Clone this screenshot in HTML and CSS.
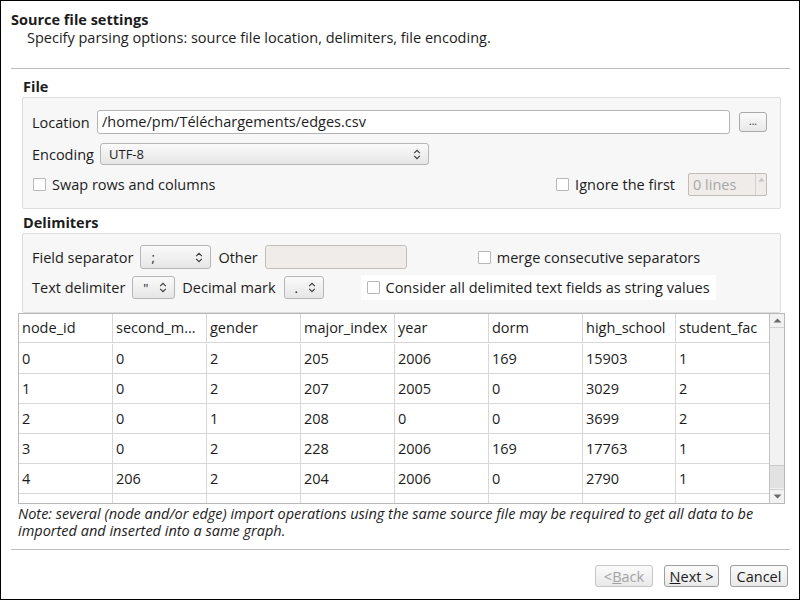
FILE: index.html
```html
<!DOCTYPE html>
<html>
<head>
<meta charset="utf-8">
<link rel="stylesheet" href="styles.css">
</head>
<body>
<div class="dialog">
  <div class="head">
    <div class="title">Source file settings</div>
    <div class="subtitle">Specify parsing options: source file location, delimiters, file encoding.</div>
  </div>
  <div class="sep"></div>
  <div class="content">
    <div class="group-label">File</div>
    <div class="box file-box">
      <div class="row row-loc">
        <span class="lbl lbl-loc">Location</span>
        <div class="field loc">/home/pm/Téléchargements/edges.csv</div>
        <div class="btn dots">...</div>
      </div>
      <div class="row row-enc">
        <span class="lbl lbl-enc">Encoding</span>
        <div class="combo enc"><span class="ctext">UTF-8</span>
          <svg class="chev" width="8" height="11" viewBox="0 0 8 11"><path d="M1.2 4.2 L4 1.4 L6.8 4.2 M1.2 6.8 L4 9.6 L6.8 6.8" fill="none" stroke="#3c3c3c" stroke-width="1.2"/></svg>
        </div>
      </div>
      <div class="row row-chk">
        <label class="check"><span class="box-chk"></span>Swap rows and columns</label>
        <div class="ignore">
          <label class="check"><span class="box-chk"></span>Ignore the first</label>
          <div class="spin"><span class="spin-text">0 lines</span><span class="spin-btn"><svg width="7" height="5" viewBox="0 0 7 5"><path d="M0.5 4.5 L3.5 0.8 L6.5 4.5 Z" fill="#c4c4c4"/></svg></span></div>
        </div>
      </div>
    </div>

    <div class="group-label delim-label">Delimiters</div>
    <div class="box delim-box">
      <div class="row row-d1">
        <span class="lbl">Field separator</span>
        <div class="combo c-field"><span class="ctext">;</span>
          <svg class="chev" width="8" height="11" viewBox="0 0 8 11"><path d="M1.2 4.2 L4 1.4 L6.8 4.2 M1.2 6.8 L4 9.6 L6.8 6.8" fill="none" stroke="#3c3c3c" stroke-width="1.2"/></svg>
        </div>
        <span class="lbl lbl-other">Other</span>
        <div class="field other"></div>
        <label class="check merge"><span class="box-chk"></span>merge consecutive separators</label>
      </div>
      <div class="row row-d2">
        <span class="lbl">Text delimiter</span>
        <div class="combo c-text"><span class="ctext">"</span>
          <svg class="chev" width="8" height="11" viewBox="0 0 8 11"><path d="M1.2 4.2 L4 1.4 L6.8 4.2 M1.2 6.8 L4 9.6 L6.8 6.8" fill="none" stroke="#3c3c3c" stroke-width="1.2"/></svg>
        </div>
        <span class="lbl lbl-dec">Decimal mark</span>
        <div class="combo c-dec"><span class="ctext">.</span>
          <svg class="chev" width="8" height="11" viewBox="0 0 8 11"><path d="M1.2 4.2 L4 1.4 L6.8 4.2 M1.2 6.8 L4 9.6 L6.8 6.8" fill="none" stroke="#3c3c3c" stroke-width="1.2"/></svg>
        </div>
        <label class="check consider"><span class="box-chk"></span>Consider all delimited text fields as string values</label>
      </div>
    </div>

    <div class="table">
      <div class="grid">
        <div class="c h">node_id</div><div class="c h">second_m…</div><div class="c h">gender</div><div class="c h">major_index</div><div class="c h">year</div><div class="c h">dorm</div><div class="c h">high_school</div><div class="c h">student_fac</div>
        <div class="c">0</div><div class="c">0</div><div class="c">2</div><div class="c">205</div><div class="c">2006</div><div class="c">169</div><div class="c">15903</div><div class="c">1</div>
        <div class="c">1</div><div class="c">0</div><div class="c">2</div><div class="c">207</div><div class="c">2005</div><div class="c">0</div><div class="c">3029</div><div class="c">2</div>
        <div class="c">2</div><div class="c">0</div><div class="c">1</div><div class="c">208</div><div class="c">0</div><div class="c">0</div><div class="c">3699</div><div class="c">2</div>
        <div class="c">3</div><div class="c">0</div><div class="c">2</div><div class="c">228</div><div class="c">2006</div><div class="c">169</div><div class="c">17763</div><div class="c">1</div>
        <div class="c">4</div><div class="c">206</div><div class="c">2</div><div class="c">204</div><div class="c">2006</div><div class="c">0</div><div class="c">2790</div><div class="c">1</div>
        <div class="c"></div><div class="c"></div><div class="c"></div><div class="c"></div><div class="c"></div><div class="c"></div><div class="c"></div><div class="c"></div>
      </div>
      <div class="vscroll">
        <div class="sb-btn sb-up"><svg width="9" height="5" viewBox="0 0 9 5"><path d="M0.5 4.5 L4.5 0.5 L8.5 4.5 Z" fill="#6a6a6a"/></svg></div>
        <div class="sb-track"><div class="sb-thumb"></div></div>
        <div class="sb-btn sb-down"><svg width="9" height="5" viewBox="0 0 9 5"><path d="M0.5 0.5 L4.5 4.5 L8.5 0.5 Z" fill="#6a6a6a"/></svg></div>
      </div>
    </div>

    <div class="note">Note: several (node and/or edge) import operations using the same source file may be required to get all data to be imported and inserted into a same graph.</div>
  </div>
  <div class="sep sep2"></div>
  <div class="footer">
    <div class="btn pbtn disabled">&lt; <u>B</u>ack</div>
    <div class="btn pbtn"><u>N</u>ext &gt;</div>
    <div class="btn pbtn">Cancel</div>
  </div>
</div>
</body>
</html>
```

FILE: styles.css
```css
* { box-sizing: border-box; }

body {
  margin: 0;
  font-family: "Open Sans", "Noto Sans", "DejaVu Sans", sans-serif;
  font-size: 14.5px;
  color: #1c1c1c;
  background: #fff;
}

.dialog {
  width: 800px;
  height: 600px;
  border: 1px solid #000;
  background: #fff;
  display: flex;
  flex-direction: column;
}

.head {
  height: 67px;
  padding: 10px 10px 0 10px;
  line-height: 18px;
}
.title { font-weight: bold; }
.subtitle { padding-left: 16px; }

.sep {
  height: 1px;
  background: #bdbdbd;
  margin: 0 9px 0 10px;
  flex: none;
}

.content {
  padding: 0 15px 0 16px;
}

.group-label {
  font-weight: bold;
  line-height: 16px;
  margin: 10px 0 2px 6px;
}
.delim-label { margin-top: 6px; }

.box {
  margin: 0 3px 0 5px;
  border: 1px solid #dcdcdc;
  border-radius: 2px;
  background: #f7f7f7;
}
.file-box { padding: 12px 13px 12px 9px; }
.delim-box { padding: 11px 13px 13px 9px; height: 80px; }

.row {
  display: flex;
  align-items: center;
}
.row-loc { height: 24px; }
.row-enc { height: 22px; margin-top: 9px; }
.row-chk { height: 23px; margin-top: 8px; justify-content: space-between; }
.row-d1 { height: 24px; }
.row-d2 { height: 23px; margin-top: 7px; }

.lbl { white-space: nowrap; }
.lbl-loc { width: 65px; flex: none; }
.lbl-enc { width: 68px; flex: none; }

.field {
  height: 24px;
  border: 1px solid #b4b4b4;
  border-radius: 3px;
  background: #fff;
  padding: 0 4px;
  line-height: 22px;
  white-space: nowrap;
}
.loc { flex: 1; }
.other {
  width: 142px;
  background: #efece9;
  border-color: #c2bfbb;
  margin-left: 7px;
}

.btn {
  border: 1px solid #a9a9a9;
  border-radius: 3px;
  background: linear-gradient(#fbfbfb, #e9e9e9);
  display: flex;
  align-items: center;
  justify-content: center;
  white-space: nowrap;
}
.dots {
  width: 28px;
  height: 20px;
  margin-left: 9px;
  font-size: 10px;
  line-height: 10px;
  padding-bottom: 2px;
}

.combo {
  height: 22px;
  border: 1px solid #b6b6b6;
  border-radius: 3px;
  background: linear-gradient(#fafafa, #e6e6e6);
  display: flex;
  align-items: center;
  justify-content: space-between;
  padding: 0 7px 0 8px;
  flex: none;
}
.combo .ctext { font-size: 13px; }
.enc { width: 329px; }
.c-field { width: 71px; height: 24px; margin-left: 7px; padding-left: 10px; }
.c-text { width: 43px; height: 23px; margin-left: 7px; padding-left: 10px; }
.c-dec { width: 40px; height: 23px; margin-left: 8px; padding-left: 10px; }
.lbl-other { margin-left: 7px; }
.lbl-dec { margin-left: 7px; }

.check {
  display: flex;
  align-items: center;
  white-space: nowrap;
}
.box-chk {
  width: 13px;
  height: 13px;
  border: 1px solid #b7b7b7;
  border-radius: 1px;
  background: #fff;
  margin: 0 6px 0 1px;
  flex: none;
}
.merge { margin-left: 70px; }
.consider {
  margin-left: 37px;
  background: #fff;
  height: 25px;
  padding: 0 6px 0 5px;
}

.ignore {
  display: flex;
  align-items: center;
}
.spin {
  width: 79px;
  height: 23px;
  margin-left: 13px;
  border: 1px solid #c0bdb9;
  border-radius: 2px;
  background: #efece9;
  display: flex;
  justify-content: space-between;
}
.spin-text { color: #a8a8a8; padding-left: 4px; line-height: 21px; }
.spin-btn {
  width: 11px;
  border-left: 1px solid #d4d1cd;
  display: flex;
  justify-content: center;
  padding-top: 3px;
}

.table {
  margin: 0 0 0 1px;
  width: 767px;
  height: 191px;
  border: 1px solid #b9b9b9;
  display: flex;
  overflow: hidden;
}
.grid {
  display: grid;
  grid-template-columns: 94px 94px 94px 94px 94px 94px 93px 93px;
  grid-auto-rows: 30px;
  align-content: start;
  width: 750px;
  background: #fff;
}
.c {
  border-right: 1px solid #d7d7d7;
  border-bottom: 1px solid #d7d7d7;
  padding-left: 3px;
  display: flex;
  align-items: center;
  white-space: nowrap;
  overflow: hidden;
  padding-bottom: 1px;
}
.c.h { height: 29px; }
.c:nth-child(8n) { border-right: none; }

.vscroll {
  width: 15px;
  border-left: 1px solid #c3c3c3;
  background: #f2f2f2;
  display: flex;
  flex-direction: column;
}
.sb-btn {
  height: 14px;
  display: flex;
  align-items: center;
  justify-content: center;
  flex: none;
}
.sb-up { border-bottom: 1px solid #d2d2d2; }
.sb-down { border-top: 1px solid #d2d2d2; }
.sb-track {
  flex: 1;
  display: flex;
  flex-direction: column;
  justify-content: flex-end;
  padding-bottom: 1px;
}
.sb-thumb {
  height: 23px;
  background: #e2e2e2;
  border-top: 1px solid #cacaca;
}

.note {
  font-style: italic;
  line-height: 17px;
  margin: 1px 0 10px 1px;
}

.sep2 { margin-top: 0; }

.footer {
  display: flex;
  justify-content: flex-end;
  gap: 11px;
  padding: 15px 11px 0 0;
}
.pbtn {
  height: 22px;
  padding: 0 6px;
  border-color: #9e9e9e;
}
.pbtn:nth-child(1) { width: 58px; }
.pbtn:nth-child(2) { width: 55px; }
.pbtn:nth-child(3) { width: 58px; }
.disabled { color: #a3a3a3; border-color: #c6c6c6; }
```
